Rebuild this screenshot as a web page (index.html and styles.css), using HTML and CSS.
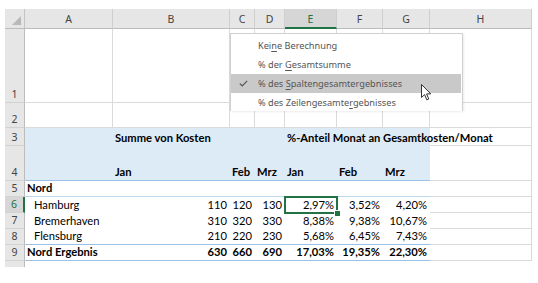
FILE: index.html
```html
<!DOCTYPE html>
<html lang="de">
<head>
<meta charset="utf-8">
<title>Pivot</title>
<link rel="stylesheet" href="styles.css">
</head>
<body>
<div class="sheet">
  <!-- column headers -->
  <div class="corner"><span class="tri"></span></div>
  <div class="ch">A</div>
  <div class="ch">B</div>
  <div class="ch">C</div>
  <div class="ch">D</div>
  <div class="ch ch-sel">E</div>
  <div class="ch">F</div>
  <div class="ch">G</div>
  <div class="ch">H</div>

  <!-- row 1 -->
  <div class="rh">1</div>
  <div class="c g"></div><div class="c g"></div><div class="c g"></div><div class="c g"></div>
  <div class="c g"></div><div class="c g"></div><div class="c g"></div><div class="c g"></div>

  <!-- row 2 -->
  <div class="rh">2</div>
  <div class="c g"></div><div class="c g"></div><div class="c g"></div><div class="c g"></div>
  <div class="c g"></div><div class="c g"></div><div class="c g"></div><div class="c g"></div>

  <!-- row 3 -->
  <div class="rh">3</div>
  <div class="c ph"></div>
  <div class="c ph b">Summe von Kosten</div>
  <div class="c ph"></div>
  <div class="c ph"></div>
  <div class="c ph b over span3">%-Anteil Monat an Gesamtkosten/Monat</div>
  <div class="c g"></div>

  <!-- row 4 -->
  <div class="rh">4</div>
  <div class="c ph ph-last"></div>
  <div class="c ph ph-last b">Jan</div>
  <div class="c ph ph-last b">Feb</div>
  <div class="c ph ph-last b">Mrz</div>
  <div class="c ph ph-last b">Jan</div>
  <div class="c ph ph-last b">Feb</div>
  <div class="c ph ph-last b">Mrz</div>
  <div class="c g"></div>

  <!-- row 5 -->
  <div class="rh">5</div>
  <div class="c pb line-lt b">Nord</div>
  <div class="c pb line-lt"></div><div class="c pb line-lt"></div><div class="c pb line-lt"></div>
  <div class="c pb line-lt"></div><div class="c pb line-lt"></div><div class="c pb line-lt"></div>
  <div class="c g"></div>

  <!-- row 6 -->
  <div class="rh rh-sel">6</div>
  <div class="c pb ind">Hamburg</div>
  <div class="c pb n">110</div>
  <div class="c pb n">120</div>
  <div class="c pb n">130</div>
  <div class="c pb n sel">2,97%</div>
  <div class="c pb n">3,52%</div>
  <div class="c pb n">4,20%</div>
  <div class="c g"></div>

  <!-- row 7 -->
  <div class="rh">7</div>
  <div class="c pb ind">Bremerhaven</div>
  <div class="c pb n">310</div>
  <div class="c pb n">320</div>
  <div class="c pb n">330</div>
  <div class="c pb n">8,38%</div>
  <div class="c pb n">9,38%</div>
  <div class="c pb n">10,67%</div>
  <div class="c g"></div>

  <!-- row 8 -->
  <div class="rh">8</div>
  <div class="c pb ind line">Flensburg</div>
  <div class="c pb n line">210</div>
  <div class="c pb n line">220</div>
  <div class="c pb n line">230</div>
  <div class="c pb n line">5,68%</div>
  <div class="c pb n line">6,45%</div>
  <div class="c pb n line">7,43%</div>
  <div class="c g"></div>

  <!-- row 9 -->
  <div class="rh">9</div>
  <div class="c pb b line">Nord Ergebnis</div>
  <div class="c pb n b line">630</div>
  <div class="c pb n b line">660</div>
  <div class="c pb n b line">690</div>
  <div class="c pb n b line">17,03%</div>
  <div class="c pb n b line">19,35%</div>
  <div class="c pb n b line">22,30%</div>
  <div class="c g"></div>

  <!-- partial row 10 -->
  <div class="rh rh-stub"></div>

  <!-- dropdown menu -->
  <div class="menu">
    <div class="mi"><span>Kei<u>n</u>e Berechnung</span></div>
    <div class="mi"><span>% der <u>G</u>esamtsumme</span></div>
    <div class="mi mi-on">
      <svg class="check" width="9" height="7" viewBox="0 0 9 7"><polyline points="0.8,3.6 3.2,5.8 8.2,0.8" fill="none" stroke="#555" stroke-width="1.2"/></svg>
      <span>% des <u>S</u>paltengesamtergebnisses</span>
    </div>
    <div class="mi"><span>% des Zeilengesamte<u>r</u>gebnisses</span></div>
  </div>

  <svg class="cursor" width="12" height="18" viewBox="0 0 12 18">
    <path d="M0.5 0.5 L0.5 13.5 L3.6 10.6 L5.8 15.8 L7.8 15 L5.6 9.9 L9.8 9.9 Z" fill="#fff" stroke="#333" stroke-width="1" stroke-linejoin="round"/>
  </svg>
</div>
</body>
</html>
```

FILE: styles.css
```css
html, body {
  margin: 0;
  padding: 0;
  background: #fff;
}

.sheet {
  position: relative;
  margin: 9px 0 0 5px;
  width: 527px;
  display: grid;
  grid-template-columns: 20px 88px 117px 25px 30px 52px 46px 47px 102px;
  grid-template-rows: 20px 74px 25px 18px 35px 16px 16px 16px 16px 16px 6px;
  font-family: Lato, "Liberation Sans", sans-serif;
  font-size: 11.2px;
  color: #000;
}

.corner {
  position: relative;
  background: #e6e6e6;
  border-right: 1px solid #c4c4c4;
  border-bottom: 1px solid #bcbcbc;
  box-sizing: border-box;
}
.tri {
  position: absolute;
  right: 3px;
  bottom: 3px;
  width: 0;
  height: 0;
  border-left: 9px solid transparent;
  border-bottom: 9px solid #b8b8b8;
}

.ch {
  background: #e6e6e6;
  border-right: 1px solid #cfcfcf;
  border-bottom: 1px solid #bcbcbc;
  box-sizing: border-box;
  display: flex;
  align-items: center;
  justify-content: center;
  font-family: "Noto Sans", "Open Sans", sans-serif;
  font-size: 10.5px;
  color: #444;
  padding-top: 1px;
}
.ch-sel {
  background: #d6d6d6;
  color: #217346;
  border-bottom: 2px solid #217346;
}

.rh {
  background: #e6e6e6;
  border-right: 1px solid #bcbcbc;
  border-bottom: 1px solid #d2d2d2;
  box-sizing: border-box;
  display: flex;
  align-items: flex-end;
  justify-content: center;
  font-family: "Noto Sans", "Open Sans", sans-serif;
  font-size: 10.5px;
  color: #444;
  line-height: 14px;
  padding-bottom: 1px;
}
.rh-sel {
  background: #d6d6d6;
  color: #217346;
  border-right: 2px solid #217346;
}
.rh-stub {
  border-bottom: none;
}

.c {
  box-sizing: border-box;
  display: flex;
  align-items: flex-end;
  padding: 0 3px 1px 2px;
  white-space: nowrap;
  line-height: 14px;
  min-width: 0;
}
.g {
  border-right: 1px solid #dadada;
  border-bottom: 1px solid #dadada;
}
.ph {
  background: #ddebf7;
}
.ph-last {
  border-bottom: 1px solid #9bc2e6;
}
.pb {
  background: #fff;
}
.line-lt {
  border-bottom: 1px solid #bdd7ee;
}
.line {
  border-bottom: 1px solid #9bc2e6;
}
.b {
  font-weight: 700;
}
.n {
  justify-content: flex-end;
}
.ind {
  padding-left: 9px;
}
.span3 {
  grid-column: span 3;
}
.over {
  position: relative;
  z-index: 1;
  overflow: visible;
}
.sel {
  position: relative;
  z-index: 2;
  outline: 2px solid #217346;
  outline-offset: -1px;
}
.sel::after {
  content: "";
  position: absolute;
  right: -4px;
  bottom: -4px;
  width: 5px;
  height: 5px;
  background: #217346;
  border: 1px solid #fff;
}

.menu {
  position: absolute;
  left: 225px;
  top: 24px;
  width: 233px;
  height: 78px;
  background: #fff;
  border: 1px solid #d0d0d0;
  border-bottom: none;
  box-shadow: 1px 1px 2px rgba(0,0,0,0.08);
  padding-top: 2px;
  box-sizing: border-box;
  z-index: 5;
  font-family: "Noto Sans", "Open Sans", sans-serif;
  font-size: 9.2px;
  color: #555;
}
.mi {
  position: relative;
  height: 19px;
  line-height: 19px;
  padding-left: 27px;
  white-space: nowrap;
}
.mi u {
  text-decoration-thickness: 1px;
  text-underline-offset: 2px;
}
.mi-on {
  background: #c9c9c9;
  margin-right: 1px;
}
.check {
  position: absolute;
  left: 8px;
  top: 6px;
}
.cursor {
  position: absolute;
  left: 416px;
  top: 75px;
  z-index: 6;
}
```
